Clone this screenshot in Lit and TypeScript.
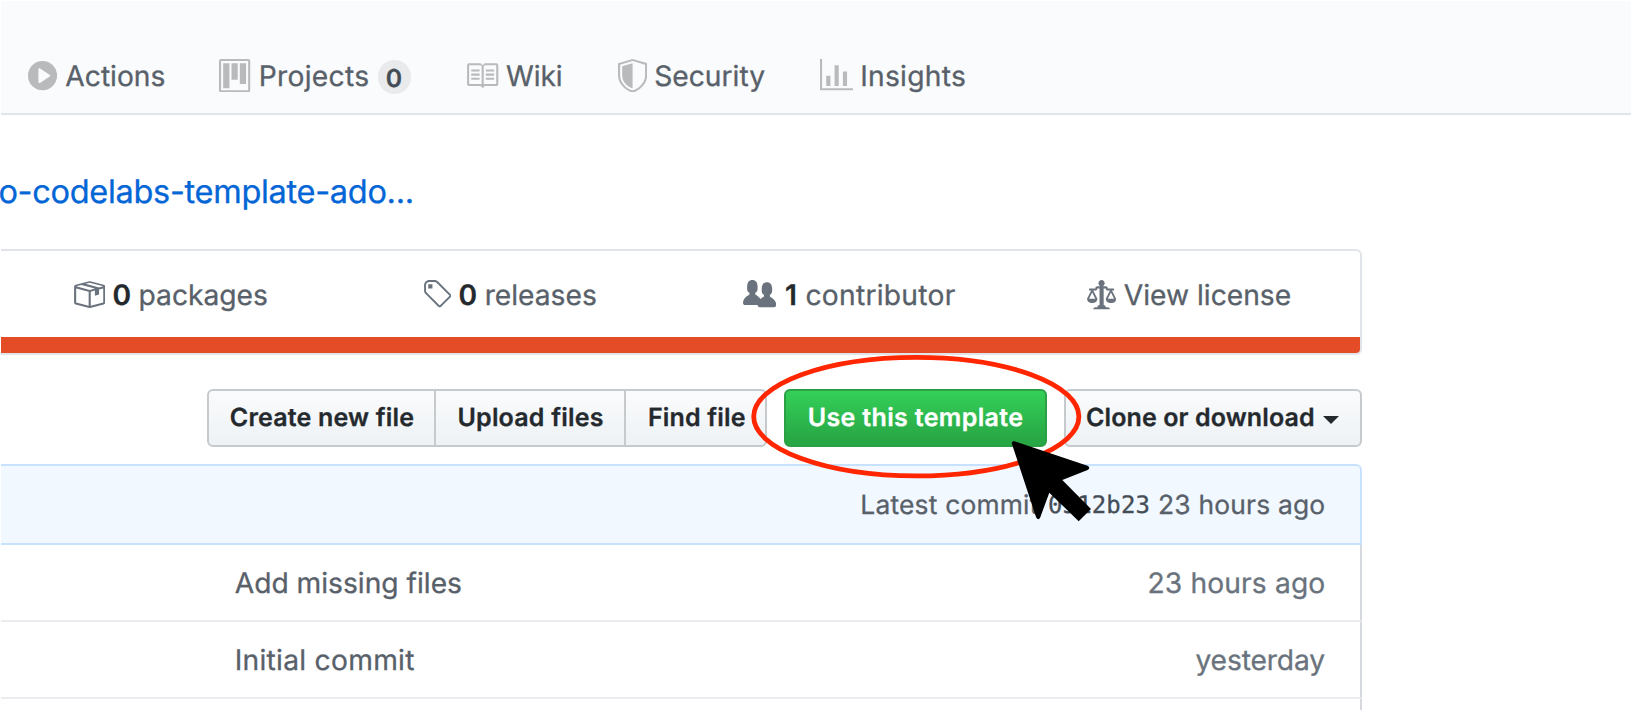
import { LitElement, html, svg, css } from "lit";

interface Icon {
  w: number;
  d: string;
}

const ICONS: Record<string, Icon> = {
  play: { w: 14, d: "M14 8A7 7 0 110 8a7 7 0 0114 0zm-8.223 3.482l4.599-3.066a.5.5 0 000-.832L5.777 4.518A.5.5 0 005 4.934v6.132a.5.5 0 00.777.416z" },
  project: { w: 15, d: "M10 12h3V2h-3v10zm-4-2h3V2H6v8zm-4 4h3V2H2v12zm-1 1h13V1H1v14zM14 0H1a1 1 0 0 0-1 1v14a1 1 0 0 0 1 1h13a1 1 0 0 0 1-1V1a1 1 0 0 0-1-1z" },
  book: { w: 16, d: "M3 5h4v1H3V5zm0 3h4V7H3v1zm0 2h4V9H3v1zm11-5h-4v1h4V5zm0 2h-4v1h4V7zm0 2h-4v1h4V9zm2-6v9c0 .55-.45 1-1 1H9.5l-1 1-1-1H2c-.55 0-1-.45-1-1V3c0-.55.45-1 1-1h5.5l1 1 1-1H15c.55 0 1 .45 1 1zm-8 .5L7.5 3H2v9h6V3.5zm7-.5H9.5l-.5.5V12h6V3z" },
  shield: { w: 14, d: "M0 2l7-2 7 2v6.02C14 12.69 8.69 16 7 16c-1.69 0-7-3.31-7-7.98V2zm1 .75L7 1l6 1.75v5.268C13 12.104 8.449 15 7 15c-1.449 0-6-2.896-6-6.982V2.75zm1 .75L7 2v12c-1.207 0-5-2.482-5-5.985V3.5z" },
  graph: { w: 16, d: "M16 14v1H0V0h1v14h15zM5 13H3V8h2v5zm4 0H7V3h2v10zm4 0h-2V6h2v7z" },
  package: { w: 16, d: "M1 4.27v7.47c0 .45.3.84.75.97l6.5 1.73c.16.05.34.05.5 0l6.5-1.73c.45-.13.75-.52.75-.97V4.27c0-.45-.3-.84-.75-.97l-6.5-1.74a1.4 1.4 0 0 0-.5 0L1.75 3.3c-.45.13-.75.52-.75.97zm7 9.09l-6-1.59V5l6 1.61v6.75zM2 4l2.5-.67L11 5.06l-2.5.67L2 4zm13 7.77l-6 1.59V6.61l2-.55V8.5l2-.53V5.53L15 5v6.77zm-2-7.24L6.5 2.8l2-.53L15 4l-2 .53z" },
  tag: { w: 14, d: "M7.73 1.73C7.26 1.26 6.62 1 5.96 1H3.5C2.13 1 1 2.13 1 3.5v2.47c0 .66.27 1.3.73 1.77l6.06 6.06c.39.39 1.02.39 1.41 0l4.59-4.59a.996.996 0 0 0 0-1.41L7.73 1.73zM2.38 7.09c-.31-.3-.47-.7-.47-1.13V3.5c0-.88.72-1.59 1.59-1.59h2.47c.42 0 .83.16 1.13.47l6.14 6.13-4.73 4.73-6.13-6.15zM3.01 3h2v2H3V3h.01z" },
  people: { w: 16, d: "M16 12.999c0 .439-.45 1-1 1H7.995c-.539 0-.994-.447-.995-.999H1c-.54 0-1-.561-1-1 0-2.634 3-4 3-4s.229-.409 0-1c-.841-.621-1.058-.59-1-3 .058-2.419 1.367-3 2.5-3s2.442.58 2.5 3c.058 2.41-.159 2.379-1 3-.229.59 0 1 0 1s1.549.711 2.42 2.088C9.196 9.369 10 8.999 10 8.999s.229-.409 0-1c-.841-.62-1.058-.59-1-3 .058-2.419 1.367-3 2.5-3s2.437.581 2.495 3c.059 2.41-.158 2.38-1 3-.229.59 0 1 0 1s3.005 1.366 3.005 4z" },
  law: { w: 14, d: "M7 4c-.83 0-1.5-.67-1.5-1.5S6.17 1 7 1s1.5.67 1.5 1.5S7.83 4 7 4zm7 6c0 1.11-.89 2-2 2h-1c-1.11 0-2-.89-2-2l2-4h-1c-.55 0-1-.45-1-1H8v8c.42 0 1 .45 1 1h1c.42 0 1 .45 1 1H3c0-.55.58-1 1-1h1c0-.55.58-1 1-1h.03L6 5H5c0 .55-.45 1-1 1H3l2 4c0 1.11-.89 2-2 2H2c-1.11 0-2-.89-2-2l2-4H1V5h3c0-.55.45-1 1-1h4c.55 0 1 .45 1 1h3v1h-1l2 4zM2.5 7L1 10h3L2.5 7zM13 10l-1.5-3-1.5 3h3z" },
};

const UNIT = 2.083;

const icon = (name: string) => {
  const { w, d } = ICONS[name];
  return html`<svg class="icon" width=${w * UNIT} height=${16 * UNIT} viewBox="0 0 ${w} 16">
    ${svg`<path fill-rule="evenodd" d=${d}></path>`}
  </svg>`;
};

class AppRoot extends LitElement {
  static styles = css`
    :host {
      display: block;
      position: relative;
      box-sizing: border-box;
      width: 1631px;
      height: 710px;
      padding: 1px 0 0 1px;
      overflow: hidden;
      background: #fff;
      color: #586069;
      font-family: Inter, "Liberation Sans", sans-serif;
      font-size: 28.2px;
      white-space: nowrap;
      text-rendering: geometricPrecision;
      -webkit-text-stroke: 0.3px;
    }
    * { box-sizing: border-box; }
    .icon { flex: none; display: block; fill: #6a737d; }
    .nav {
      display: grid;
      grid-template-columns: 191.4px 246.1px 152.4px 201.8px auto;
      align-items: center;
      height: 114px;
      padding: 36.5px 0 0 26.9px;
      background: #fafbfc;
      border-bottom: 2px solid #e1e4e8;
    }
    .tab { display: flex; align-items: center; gap: 8.3px; height: 40px; }
    .tab .icon { fill: #b9babb; }
    .label { padding-top: 1.6px; }
    .tab .near { margin-left: -1px; }
    .wide { letter-spacing: 0.28px; }
    .tight { letter-spacing: -0.1px; }
    .badge {
      display: flex;
      align-items: center;
      justify-content: center;
      width: 33px;
      height: 34px;
      margin: 4px 0 0 0.5px;
      padding: 1px 1.5px 0 0;
      border-radius: 17px;
      background: #e8eaec;
      color: #444d56;
      font-size: 24.8px;
      font-weight: 600;
    }
    .title {
      height: 134px;
      padding-top: 57px;
      margin-left: -2.6px;
      line-height: 40px;
      font-size: 32.5px;
      letter-spacing: -0.3px;
      color: #0366d6;
    }
    .content { width: 1361px; }
    .stats {
      height: 106px;
      border: 2px solid #e1e4e8;
      border-left: 0;
      border-radius: 0 6px 6px 0;
      overflow: hidden;
    }
    .counts {
      display: grid;
      grid-template-columns: 350.3px 321.2px 344.1px auto;
      align-items: center;
      height: 85.5px;
      padding: 1px 0 0 70.6px;
    }
    .stat { display: flex; align-items: center; gap: 7.5px; }
    .stat b { font-weight: 600; color: #24292e; padding-top: 1.6px; }
    .stat .one { width: 14px; padding-left: 1px; }
    .language { height: 16.5px; background: #e34c26; }
    .actions { display: flex; height: 58px; margin: 34px 0 17px 206.4px; }
    .btn {
      display: flex;
      align-items: center;
      height: 58px;
      padding: 0 0 0.6px 20.4px;
      border: 2px solid #c7cacd;
      border-radius: 6px;
      background: linear-gradient(#fafbfc, #eff3f6 90%);
      color: #24292e;
      font-size: 25px;
      font-weight: 600;
      letter-spacing: 0.2px;
    }
    .create { width: 228.6px; border-radius: 6px 0 0 6px; }
    .upload { width: 190.4px; border-left: 0; border-radius: 0; padding-left: 21.5px; }
    .find { width: 141px; border-left: 0; border-radius: 0 6px 6px 0; padding-left: 21.5px; }
    .template {
      width: 262.7px;
      margin-left: 16.9px;
      padding-left: 21.4px;
      border-color: #2ba044;
      background: linear-gradient(#34d058, #28a745 90%);
      color: #fff;
      letter-spacing: 0.35px;
    }
    .clone { width: 298px; margin-left: 17px; padding-left: 20px; letter-spacing: 0.12px; }
    .caret { width: 16px; height: 8px; margin: 4px 0 0 8px; fill: #24292e; }
    .commit {
      display: flex;
      align-items: center;
      justify-content: flex-end;
      height: 81px;
      padding: 0.6px 34.6px 0 0;
      background: #f1f8ff;
      border: 2px solid #c8e1ff;
      border-left: 0;
      border-radius: 0 6px 0 0;
      font-size: 26.4px;
      letter-spacing: 0.2px;
    }
    .sha {
      margin: 0 8px 0 9.5px;
      font: 24px "DejaVu Sans Mono", "Liberation Mono", monospace;
      letter-spacing: 0.12px;
      color: #444d56;
    }
    .row {
      display: flex;
      justify-content: space-between;
      align-items: center;
      height: 77px;
      padding: 0 34.6px 0 233.7px;
      border-right: 2px solid #d6d9dd;
      border-bottom: 2px solid #eaecef;
    }
    .row .age { color: #6a737d; letter-spacing: 0.14px; }
    .row .day { letter-spacing: -0.12px; padding-right: 0.4px; }
    .row.last { height: 20px; border-bottom: 0; }
    .overlay { position: absolute; left: 740px; top: 345px; }
  `;

  render() {
    return html`
      <nav class="nav">
        <div class="tab">${icon("play")}<span class="label">Actions</span></div>
        <div class="tab">${icon("project")}<span class="label wide">Projects</span><span class="badge">0</span></div>
        <div class="tab">${icon("book")}<span class="label near tight">Wiki</span></div>
        <div class="tab">${icon("shield")}<span class="label near">Security</span></div>
        <div class="tab">${icon("graph")}<span class="label near wide">Insights</span></div>
      </nav>
      <div class="title">o-codelabs-template-ado...</div>
      <main class="content">
        <section class="stats">
          <div class="counts">
            <div class="stat">${icon("package")}<b>0</b><span class="label">packages</span></div>
            <div class="stat">${icon("tag")}<b>0</b><span class="label">releases</span></div>
            <div class="stat">${icon("people")}<b class="one">1</b><span class="label wide">contributor</span></div>
            <div class="stat">${icon("law")}<span class="label">View license</span></div>
          </div>
          <div class="language"></div>
        </section>
        <div class="actions">
          <div class="btn create">Create new file</div>
          <div class="btn upload">Upload files</div>
          <div class="btn find">Find file</div>
          <div class="btn template">Use this template</div>
          <div class="btn clone">
            Clone or download
            <svg class="caret" viewBox="0 0 16 8"><path d="M0 0h16L8 8z"></path></svg>
          </div>
        </div>
        <div class="commit">
          <span>Latest commit</span><span class="sha">0512b23</span><span>23 hours ago</span>
        </div>
        <div class="row"><span>Add missing files</span><span class="age">23 hours ago</span></div>
        <div class="row"><span class="wide">Initial commit</span><span class="age day">yesterday</span></div>
        <div class="row last"></div>
      </main>
      <svg class="overlay" width="360" height="190" viewBox="740 345 360 190">
        <ellipse cx="916.3" cy="416.6" rx="162.6" ry="59.3" fill="none" stroke="#ff2600" stroke-width="4.8"></ellipse>
        <path
          d="M1011.8 443.5Q1011.5 440.5 1014.5 441.3L1087.5 465.8Q1091 468 1087.6 470L1062.3 480L1091 509L1078.7 521.2L1049.3 492.7L1040.2 517.5Q1038.3 521 1036.2 517.5Z"
        ></path>
      </svg>
    `;
  }
}

customElements.define("app-root", AppRoot);
